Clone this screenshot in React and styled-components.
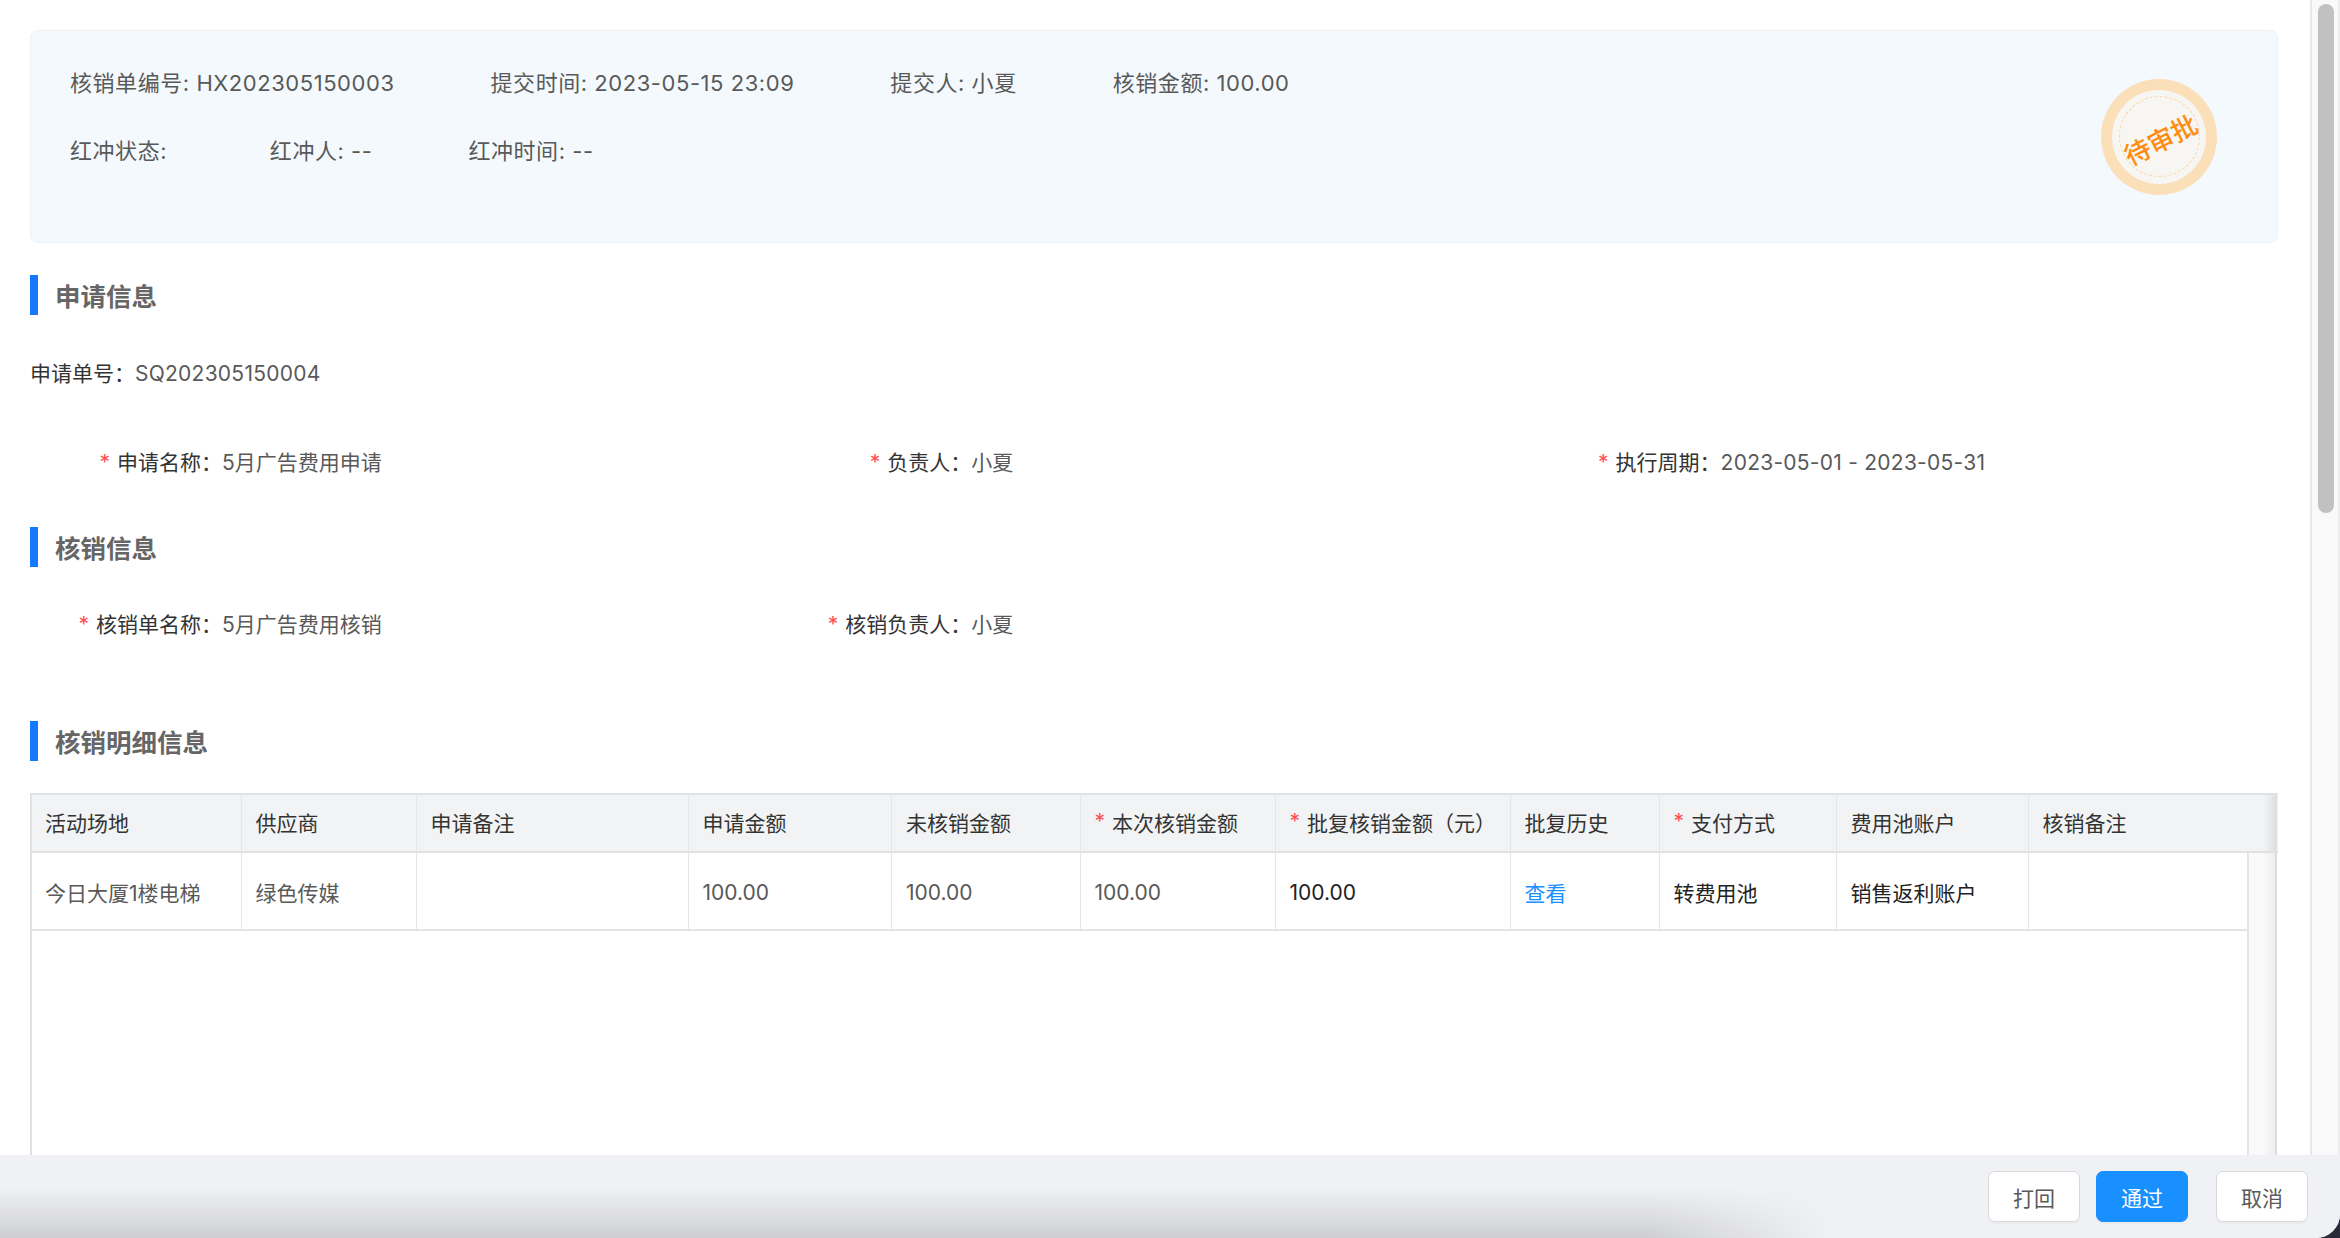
import React from "react";
import styled, { createGlobalStyle } from "styled-components";

const GlobalStyle = createGlobalStyle`
  html, body {
    margin: 0;
    padding: 0;
    height: 100%;
    overflow: hidden;
    background: #2a2a38;
  }
  #root {
    height: 100%;
  }
  * {
    box-sizing: border-box;
  }
`;

const BODY_COLUMNS = "209.5px 175px 272px 203.5px 188.5px 195px 235px 149px 177px 192px 219.5px";
const HEAD_COLUMNS = "211.5px 175px 272px 203.5px 188.5px 195px 235px 149px 177px 192px 219.5px 29px";

const Page = styled.div`
  height: 100%;
  display: flex;
  flex-direction: column;
  font-family: Inter, "Noto Sans CJK SC", sans-serif;
  font-size: 21px;
  color: #595959;
  background: #fff;
  border-bottom-right-radius: 24px;
  overflow: hidden;
`;
const Body = styled.div`
  flex: 1;
  min-height: 0;
  display: flex;
`;
const Content = styled.div`
  flex: 1;
  min-width: 0;
  padding: 30px 32px 0 30px;
  overflow: hidden;
`;
const ScrollTrack = styled.div`
  width: 30px;
  padding: 4px 2px 0 6px;
  background: #f9f9f9;
  border-left: 2px solid #e8e8e8;
  border-right: 2px solid #eee;
`;
const ScrollThumb = styled.div`
  width: 16px;
  height: 509px;
  border-radius: 8px;
  background: #c1c1c1;
`;

const InfoPanel = styled.div`
  height: 213px;
  display: flex;
  justify-content: space-between;
  align-items: center;
  padding-right: 60px;
  background: #f4f9fd;
  border: 1px solid #eef1f4;
  border-radius: 8px;
`;
const InfoRows = styled.div`
  align-self: flex-start;
  display: flex;
  flex-direction: column;
  gap: 38px;
  padding: 37px 0 0 39px;
`;
const InfoRow = styled.div`
  display: flex;
  gap: 96px;
  line-height: 30px;
  font-size: 22px;
  letter-spacing: 0.55px;
  white-space: pre;
`;
const Stamp = styled.div`
  width: 116px;
  height: 116px;
  display: flex;
  align-items: center;
  justify-content: center;
  border-radius: 50%;
  background: #fbdfb9;
`;
const StampInner = styled.div`
  width: 94px;
  height: 94px;
  display: flex;
  align-items: center;
  justify-content: center;
  border-radius: 50%;
  background: #f7f6f3;
`;
const StampRing = styled.div`
  width: 81px;
  height: 81px;
  display: flex;
  align-items: center;
  justify-content: center;
  border-radius: 50%;
  border: 1px dashed #fbd3a0;
  color: #ff8c0f;
  font-size: 26px;
  font-weight: 500;
  white-space: nowrap;
`;
const StampText = styled.span`
  display: block;
  transform: translate(1px, 2px) rotate(-27deg);
`;

const Section = styled.div`
  height: 40px;
  margin-top: ${({ $top }) => $top}px;
  display: flex;
  align-items: center;
  padding: 0 0 2px 17px;
  border-left: 8px solid #1677ff;
  font-size: 25.5px;
  font-weight: 600;
  color: #666;
`;
const FormRow = styled.div`
  display: grid;
  grid-template-columns: repeat(3, 749.3px);
  margin-top: ${({ $top }) => $top}px;
  line-height: 30px;
`;
const Field = styled.div`
  display: flex;
  white-space: nowrap;
`;
const FieldLabel = styled.div`
  width: ${({ $plain }) => ($plain ? "auto" : "192px")};
  text-align: ${({ $plain }) => ($plain ? "left" : "right")};
  color: #333;
`;
const FieldValue = styled.div`
  letter-spacing: ${({ $latin }) => ($latin ? "0.25px" : "0")};
`;
const Required = styled.span`
  margin-right: 7px;
  color: #ff4d4f;
`;

const Table = styled.div`
  height: 520px;
  margin-top: 32px;
  display: flex;
  flex-direction: column;
`;
const HeadRow = styled.div`
  display: grid;
  grid-template-columns: ${HEAD_COLUMNS};
  height: 60px;
  border-top: 2px solid #e0e1e3;
  border-bottom: 2px solid #e0e1e3;
  background: #f2f3f5;
  color: #333;
`;
const HeadCell = styled.div`
  display: flex;
  align-items: center;
  padding: 0 0 3px 14px;
  border-right: 1px solid #e4e5e7;
  white-space: nowrap;
  &:first-child {
    padding-left: 13px;
    border-left: 2px solid #e0e1e3;
  }
  &:nth-child(11) {
    border-right: 0;
  }
`;
const HeadEdge = styled.div`
  background: linear-gradient(to right, #f2f3f5 55%, #dcdde0);
`;
const TableBody = styled.div`
  flex: 1;
  display: flex;
`;
const BodyMain = styled.div`
  width: 2219px;
  border-left: 2px solid #e0e1e3;
  border-right: 2px solid #e3e4e6;
`;
const BodyRow = styled.div`
  display: grid;
  grid-template-columns: ${BODY_COLUMNS};
  height: 78px;
  border-bottom: 2px solid #e3e4e6;
`;
const BodyCell = styled.div`
  display: flex;
  align-items: center;
  padding: 2px 0 0 14px;
  border-right: 1px solid #e4e5e7;
  color: ${({ $tone }) => $tone || "inherit"};
  white-space: nowrap;
  &:first-child {
    padding-left: 13px;
  }
  &:nth-child(11) {
    border-right: 0;
  }
`;
const BodyEdge = styled.div`
  width: 28px;
  background: linear-gradient(to right, #fafafa 50%, #eeeeef 92%, #dcdcdc 92%);
`;

const Footer = styled.div`
  position: relative;
  height: 83px;
  display: flex;
  justify-content: flex-end;
  align-items: flex-start;
  padding: 16px 32px 0 0;
  background: #f0f1f5;
  &::before {
    content: "";
    position: absolute;
    left: 0;
    bottom: 0;
    width: 1830px;
    height: 50px;
    background: linear-gradient(to bottom, transparent, rgba(0, 0, 0, 0.14));
    -webkit-mask-image: linear-gradient(to right, #000 90%, transparent);
    mask-image: linear-gradient(to right, #000 90%, transparent);
  }
`;
const Button = styled.button`
  position: relative;
  width: 92px;
  height: 51px;
  margin-left: ${({ $gap }) => $gap}px;
  font-family: inherit;
  font-size: 21px;
  color: ${({ $primary }) => ($primary ? "#fff" : "#595959")};
  background: ${({ $primary }) => ($primary ? "#1890ff" : "#fff")};
  border: 1px solid ${({ $primary }) => ($primary ? "#1890ff" : "#d9d9d9")};
  border-radius: 7px;
  box-shadow: 0 2px 0 rgba(0, 0, 0, 0.02);
`;

const headers = [
  ["活动场地"],
  ["供应商"],
  ["申请备注"],
  ["申请金额"],
  ["未核销金额"],
  ["本次核销金额", true],
  ["批复核销金额（元）", true],
  ["批复历史"],
  ["支付方式", true],
  ["费用池账户"],
  ["核销备注"],
];

const row = [
  ["今日大厦1楼电梯"],
  ["绿色传媒"],
  [""],
  ["100.00"],
  ["100.00"],
  ["100.00"],
  ["100.00", "#222"],
  ["查看", "#1890ff"],
  ["转费用池", "#222"],
  ["销售返利账户", "#222"],
  [""],
];

const App = () => {
  return (
    <Page>
      <GlobalStyle />
      <Body>
        <Content>
          <InfoPanel>
            <InfoRows>
              <InfoRow>
                <span>核销单编号: HX202305150003</span>
                <span>提交时间: 2023-05-15 23:09</span>
                <span>提交人: 小夏</span>
                <span>核销金额: 100.00</span>
              </InfoRow>
              <InfoRow>
                <span>红冲状态: </span>
                <span>红冲人: --</span>
                <span>红冲时间: --</span>
              </InfoRow>
            </InfoRows>
            <Stamp>
              <StampInner>
                <StampRing>
                  <StampText>待审批</StampText>
                </StampRing>
              </StampInner>
            </Stamp>
          </InfoPanel>

          <Section $top={32}>申请信息</Section>
          <FormRow $top={44}>
            <Field>
              <FieldLabel $plain>申请单号：</FieldLabel>
              <FieldValue $latin>SQ202305150004</FieldValue>
            </Field>
          </FormRow>
          <FormRow $top={59}>
            <Field>
              <FieldLabel><Required>*</Required>申请名称：</FieldLabel>
              <FieldValue>5月广告费用申请</FieldValue>
            </Field>
            <Field>
              <FieldLabel><Required>*</Required>负责人：</FieldLabel>
              <FieldValue>小夏</FieldValue>
            </Field>
            <Field>
              <FieldLabel><Required>*</Required>执行周期：</FieldLabel>
              <FieldValue $latin>2023-05-01 - 2023-05-31</FieldValue>
            </Field>
          </FormRow>

          <Section $top={49}>核销信息</Section>
          <FormRow $top={43}>
            <Field>
              <FieldLabel><Required>*</Required>核销单名称：</FieldLabel>
              <FieldValue>5月广告费用核销</FieldValue>
            </Field>
            <Field>
              <FieldLabel><Required>*</Required>核销负责人：</FieldLabel>
              <FieldValue>小夏</FieldValue>
            </Field>
          </FormRow>

          <Section $top={81}>核销明细信息</Section>
          <Table>
            <HeadRow>
              {headers.map(([title, required]) => (
                <HeadCell key={title}>
                  {required && <Required>*</Required>}
                  {title}
                </HeadCell>
              ))}
              <HeadEdge />
            </HeadRow>
            <TableBody>
              <BodyMain>
                <BodyRow>
                  {row.map(([text, tone], i) => (
                    <BodyCell key={i} $tone={tone}>{text}</BodyCell>
                  ))}
                </BodyRow>
              </BodyMain>
              <BodyEdge />
            </TableBody>
          </Table>
        </Content>
        <ScrollTrack>
          <ScrollThumb />
        </ScrollTrack>
      </Body>
      <Footer>
        <Button>打回</Button>
        <Button $primary $gap={16}>通过</Button>
        <Button $gap={28}>取消</Button>
      </Footer>
    </Page>
  );
};

export default App;
